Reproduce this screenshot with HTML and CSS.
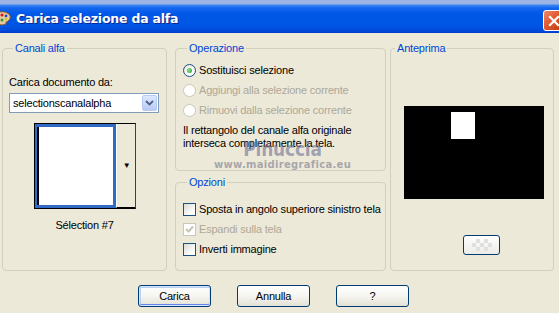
FILE: index.html
```html
<!DOCTYPE html>
<html lang="it">
<head>
    <meta charset="UTF-8">
    <title>Carica selezione da alfa</title>
    <link rel="stylesheet" href="styles.css">
</head>
<body>
    <div class="window">
        <div class="titlebar">
            <svg class="app-icon" width="12" height="16" viewBox="0 0 12 16">
                <path d="M-4 3 Q4 0 9 4 Q12 8 8 11 Q5 12 6 14 Q3 16 -4 14 Z" fill="#e9c9a0" stroke="#8a5a2a" stroke-width="1"/>
                <circle cx="2" cy="5" r="1.6" fill="#d02020"/>
                <circle cx="6" cy="6" r="1.4" fill="#2050d0"/>
                <circle cx="2" cy="10" r="1.5" fill="#20a030"/>
                <circle cx="6" cy="9" r="1.2" fill="#e0c020"/>
            </svg>
            <span class="title">Carica selezione da alfa</span>
            <div class="close-btn">
                <svg width="14" height="14" viewBox="0 0 14 14">
                    <path d="M3 3 L11 11 M11 3 L3 11" stroke="#fff" stroke-width="2.2" stroke-linecap="square"/>
                </svg>
            </div>
        </div>

        <div class="main">
            <fieldset class="group group-canali">
                <legend>Canali alfa</legend>
                <label class="field-label">Carica documento da:</label>
                <div class="combo">
                    <span class="combo-text">selectionscanalalpha</span>
                    <span class="combo-btn">
                        <svg width="9" height="6" viewBox="0 0 9 6"><path d="M1 1 L4.5 4.5 L8 1" fill="none" stroke="#4d6185" stroke-width="1.8"/></svg>
                    </span>
                </div>
                <div class="thumb">
                    <div class="thumb-img"></div>
                    <div class="thumb-drop">&#9660;</div>
                </div>
                <div class="caption">Sélection #7</div>
            </fieldset>

            <div class="middle">
                <fieldset class="group group-operazione">
                    <legend>Operazione</legend>
                    <div class="row">
                        <span class="radio checked"></span>
                        <span>Sostituisci selezione</span>
                    </div>
                    <div class="row disabled">
                        <span class="radio"></span>
                        <span>Aggiungi alla selezione corrente</span>
                    </div>
                    <div class="row disabled">
                        <span class="radio"></span>
                        <span>Rimuovi dalla selezione corrente</span>
                    </div>
                    <p class="note">Il rettangolo del canale alfa originale<br>interseca completamente la tela.</p>
                    <div class="watermark">
                        <div class="wm-name">Pinuccia</div>
                        <div class="wm-site">www.maidiregrafica.eu</div>
                    </div>
                </fieldset>

                <fieldset class="group group-opzioni">
                    <legend>Opzioni</legend>
                    <div class="row">
                        <span class="check"></span>
                        <span>Sposta in angolo superiore sinistro tela</span>
                    </div>
                    <div class="row disabled">
                        <span class="check checked">
                            <svg width="9" height="9" viewBox="0 0 9 9"><path d="M1 4 L3.5 6.5 L8 1.5" fill="none" stroke="#c7c4b4" stroke-width="2"/></svg>
                        </span>
                        <span>Espandi sulla tela</span>
                    </div>
                    <div class="row">
                        <span class="check"></span>
                        <span>Inverti immagine</span>
                    </div>
                </fieldset>
            </div>

            <fieldset class="group group-anteprima">
                <legend>Anteprima</legend>
                <div class="preview">
                    <div class="preview-sel"></div>
                </div>
                <div class="mini-btn">
                    <span class="checker"></span>
                </div>
            </fieldset>
        </div>

        <div class="buttons">
            <button class="btn default">Carica</button>
            <button class="btn">Annulla</button>
            <button class="btn">?</button>
        </div>
    </div>
</body>
</html>
```

FILE: styles.css
```css
body {
    margin: 0;
    background-color: #ece9d8;
    font-family: "Liberation Sans", Arial, sans-serif;
    font-size: 11px;
    letter-spacing: -0.2px;
    color: #000;
    overflow: hidden;
}
.window {
    width: 559px;
    height: 313px;
}
.titlebar {
    height: 33px;
    display: flex;
    align-items: center;
    background: linear-gradient(#9db3e4 0, #9db3e4 4px, #3b86f5 5px, #1466ee 8px, #0058e8 14px, #0055e3 26px, #0048d8 31px, #003cc8 33px);
    position: relative;
    padding-top: 3px;
    box-sizing: border-box;
}
.app-icon {
    margin-left: 0;
}
.title {
    margin-left: 4px;
    color: #fff;
    font-family: "DejaVu Sans", sans-serif;
    font-weight: bold;
    font-size: 12.5px;
    letter-spacing: -0.2px;
    text-shadow: 1px 1px 0 #0a2a8a;
}
.close-btn {
    position: absolute;
    left: 543px;
    top: 10px;
    width: 21px;
    height: 21px;
    box-sizing: border-box;
    border: 1px solid #fff;
    border-radius: 3px;
    background: linear-gradient(135deg, #f08868 0, #e05830 45%, #c33a12 100%);
    display: flex;
    align-items: center;
    justify-content: center;
}
.main {
    display: flex;
    padding: 9px 0 0 2px;
    height: 229px;
}
.group {
    margin: 0;
    border: 1px solid #d0d0bf;
    border-radius: 4px;
    box-sizing: border-box;
    min-width: 0;
}
.group legend {
    color: #0046d5;
    padding: 0 2px;
    margin-left: 4px;
    line-height: 13px;
}
.group-canali {
    width: 165px;
    height: 229px;
    padding: 21px 6px 0 6px;
}
.field-label {
    display: block;
    line-height: 13px;
    margin-bottom: 4px;
}
.combo {
    width: 150px;
    height: 20px;
    box-sizing: border-box;
    border: 1px solid #7f9db9;
    background: #fff;
    display: flex;
    align-items: center;
}
.combo-text {
    flex: 1;
    padding-left: 3px;
}
.combo-btn {
    width: 15px;
    height: 16px;
    margin-right: 1px;
    border-radius: 2px;
    background: linear-gradient(#dde8fe, #b7cbf5);
    border: 1px solid #b7caf3;
    box-sizing: border-box;
    display: flex;
    align-items: center;
    justify-content: center;
}
.thumb {
    width: 102px;
    height: 86px;
    margin: 10px auto 0 auto;
    box-sizing: border-box;
    border: 1px solid #000;
    border-right-color: #404040;
    display: flex;
    background: #fff;
}
.thumb-img {
    width: 81px;
    box-sizing: border-box;
    border: 3px solid #316ac5;
    border-left-width: 2px;
    box-shadow: inset 2px 0 0 #000;
    background: #fff;
}
.thumb-drop {
    flex: 1;
    background: #ece9d8;
    border-left: 1px solid #fff;
    border-bottom: 1px solid #000;
    display: flex;
    align-items: center;
    justify-content: center;
    font-size: 8px;
    padding-left: 2px;
}
.caption {
    margin-top: 10px;
    line-height: 13px;
    text-align: center;
}
.middle {
    width: 211px;
    margin-left: 8px;
    display: flex;
    flex-direction: column;
    gap: 5px;
}
.group-operazione {
    height: 129px;
    padding: 5px 4px 0 7px;
    position: relative;
}
.group-opzioni {
    flex: 1;
    padding: 10px 2px 0 7px;
}
.row {
    height: 20px;
    display: flex;
    align-items: center;
    gap: 3px;
    white-space: nowrap;
}
.row.disabled {
    color: #aca899;
}
.radio {
    width: 13px;
    height: 13px;
    box-sizing: border-box;
    border: 1px solid #1c5180;
    border-radius: 50%;
    background: radial-gradient(circle at 65% 65%, #fff 30%, #dcdbd3 100%);
    display: flex;
    align-items: center;
    justify-content: center;
}
.radio.checked::after {
    content: "";
    width: 5px;
    height: 5px;
    border-radius: 50%;
    background: radial-gradient(circle at 40% 40%, #8be08b, #21a121);
}
.row.disabled .radio {
    border-color: #cac8bb;
    background: #fff;
}
.note {
    margin: 4px 0 0 0;
    line-height: 13px;
}
.watermark {
    position: absolute;
    left: 38px;
    top: 84px;
    text-align: center;
    pointer-events: none;
}
.wm-name {
    font-family: "DejaVu Sans", sans-serif;
    font-size: 20px;
    font-weight: bold;
    color: rgba(110, 110, 150, 0.6);
    line-height: 20px;
    transform: scaleX(0.85);
}
.wm-site {
    font-family: "DejaVu Sans", sans-serif;
    font-size: 10px;
    font-weight: bold;
    color: rgba(120, 120, 140, 0.6);
    line-height: 11px;
    letter-spacing: 0.3px;
}
.check {
    width: 13px;
    height: 13px;
    flex-shrink: 0;
    box-sizing: border-box;
    border: 1px solid #1c5180;
    background: linear-gradient(135deg, #dcdbd3, #fff 80%);
    display: flex;
    align-items: center;
    justify-content: center;
}
.row.disabled .check {
    border-color: #cac8bb;
    background: #fff;
}
.group-anteprima {
    width: 164px;
    margin-left: 4px;
    height: 229px;
    padding: 0;
    display: flex;
    flex-direction: column;
}
.preview {
    width: 140px;
    height: 93px;
    margin: 51px 0 0 13px;
    background: #000;
    position: relative;
}
.preview-sel {
    position: absolute;
    left: 47px;
    top: 6px;
    width: 24px;
    height: 27px;
    background: #fff;
}
.mini-btn {
    width: 37px;
    height: 20px;
    margin: 36px 0 0 72px;
    box-sizing: border-box;
    border: 1px solid #003c74;
    border-radius: 3px;
    background: linear-gradient(#fff, #ecebe6);
    display: flex;
    align-items: center;
    justify-content: center;
}
.checker {
    width: 20px;
    height: 12px;
    background-image: linear-gradient(45deg, #e0e0e0 25%, transparent 25%, transparent 75%, #e0e0e0 75%),
        linear-gradient(45deg, #e0e0e0 25%, transparent 25%, transparent 75%, #e0e0e0 75%);
    background-size: 8px 8px;
    background-position: 0 0, 4px 4px;
}
.buttons {
    display: flex;
    gap: 26px;
    padding-left: 138px;
    margin-top: 14px;
}
.btn {
    width: 73px;
    height: 22px;
    padding: 0;
    border: 1px solid #003c74;
    border-radius: 3px;
    background: linear-gradient(#fff 0, #f6f5f0 50%, #e3e1d5 100%);
    font-family: "Liberation Sans", Arial, sans-serif;
    font-size: 11px;
    letter-spacing: -0.2px;
    color: #000;
}
.btn.default {
    box-shadow: inset 0 0 0 1px #cee7ff, inset 0 -1px 0 1px #6982ee, inset 1px 1px 0 1px #bccfef;
}
```
